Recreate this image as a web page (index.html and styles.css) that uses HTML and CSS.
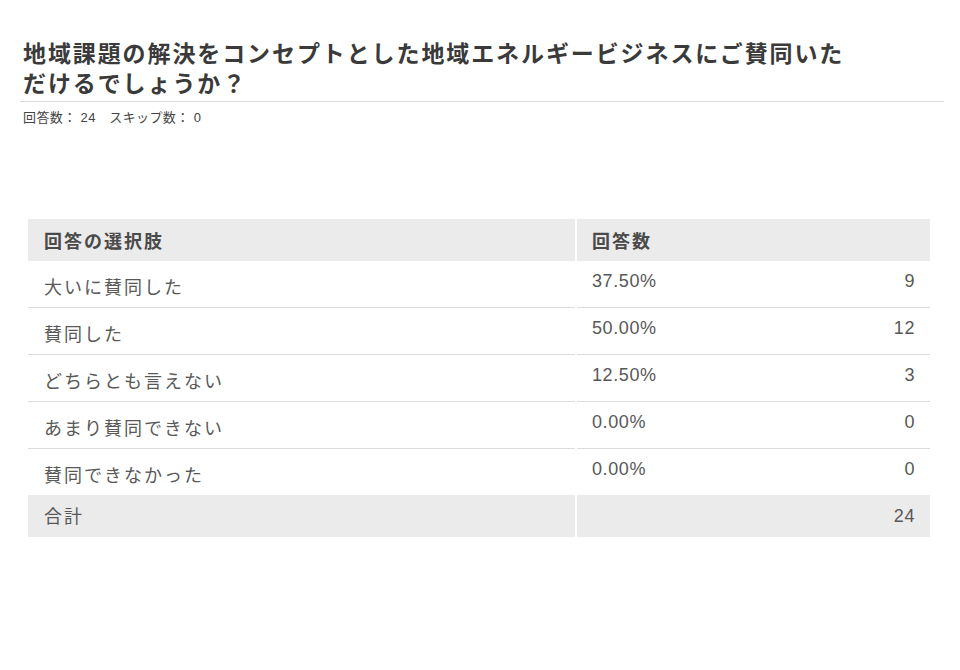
FILE: index.html
```html
<!DOCTYPE html>
<html lang="ja">
<head>
<meta charset="utf-8">
<link rel="stylesheet" href="styles.css">
</head>
<body>
<div class="page">
  <header class="head">
    <h1 class="title">地域課題の解決をコンセプトとした地域エネルギービジネスにご賛同いただけるでしょうか？</h1>
  </header>
  <p class="meta">回答数： 24　スキップ数： 0</p>
  <div class="table">
    <div class="cell th">回答の選択肢</div>
    <div class="cell th right">回答数</div>

    <div class="cell label">大いに賛同した</div>
    <div class="cell nums"><span>37.50%</span><span>9</span></div>

    <div class="cell label">賛同した</div>
    <div class="cell nums"><span>50.00%</span><span>12</span></div>

    <div class="cell label">どちらとも言えない</div>
    <div class="cell nums"><span>12.50%</span><span>3</span></div>

    <div class="cell label">あまり賛同できない</div>
    <div class="cell nums"><span>0.00%</span><span>0</span></div>

    <div class="cell label last">賛同できなかった</div>
    <div class="cell nums last"><span>0.00%</span><span>0</span></div>

    <div class="cell total">合計</div>
    <div class="cell total totalnum"><span></span><span>24</span></div>
  </div>
</div>
</body>
</html>
```

FILE: styles.css
```css
html, body {
  margin: 0;
  padding: 0;
  background: #ffffff;
}

body {
  font-family: "Liberation Sans", "Noto Sans CJK JP", sans-serif;
  color: #555555;
}

.page {
  padding: 37px 16px 0 20px;
}

.head {
  border-bottom: 1px solid #dcdcdc;
  padding: 0 0 4px 3px;
}

.title {
  margin: 0;
  width: 830px;
  font-family: "Noto Sans CJK JP", sans-serif;
  font-size: 23px;
  line-height: 30px;
  font-weight: 700;
  color: #3a3a3a;
  letter-spacing: 1.9px;
}

.meta {
  margin: 8px 0 0 3px;
  font-size: 13px;
  line-height: 16px;
  letter-spacing: 0.4px;
  color: #444;
}

.table {
  margin: 93px 0 0 8px;
  display: grid;
  grid-template-columns: 547px 353px;
  column-gap: 2px;
}

.cell {
  box-sizing: border-box;
  font-size: 18px;
  line-height: 22px;
}

.th {
  background: #ebebeb;
  height: 42px;
  padding: 10px 16px 0 16px;
  font-family: "Noto Sans CJK JP", sans-serif;
  font-weight: 700;
  font-size: 18px;
  letter-spacing: 2px;
  color: #4a4a4a;
}

.th.right {
  padding-left: 15px;
}

.label {
  height: 47px;
  border-bottom: 1px solid #dcdcdc;
  padding: 14px 16px 0 16px;
  font-family: "Noto Sans CJK JP", sans-serif;
  font-size: 18px;
  letter-spacing: 2px;
  color: #585858;
}

.nums {
  height: 47px;
  border-bottom: 1px solid #dcdcdc;
  padding: 9px 15px 0 15px;
  display: flex;
  justify-content: space-between;
  letter-spacing: 0.6px;
  color: #585858;
}

.last {
  border-bottom: none;
  height: 46px;
}

.total {
  background: #ebebeb;
  height: 42px;
  padding: 9px 16px 0 16px;
  font-family: "Noto Sans CJK JP", sans-serif;
  font-size: 18px;
  letter-spacing: 2px;
  color: #585858;
}

.totalnum {
  font-family: "Liberation Sans", sans-serif;
  display: flex;
  justify-content: space-between;
  padding: 10px 15px 0 15px;
  letter-spacing: 0.6px;
}
```
